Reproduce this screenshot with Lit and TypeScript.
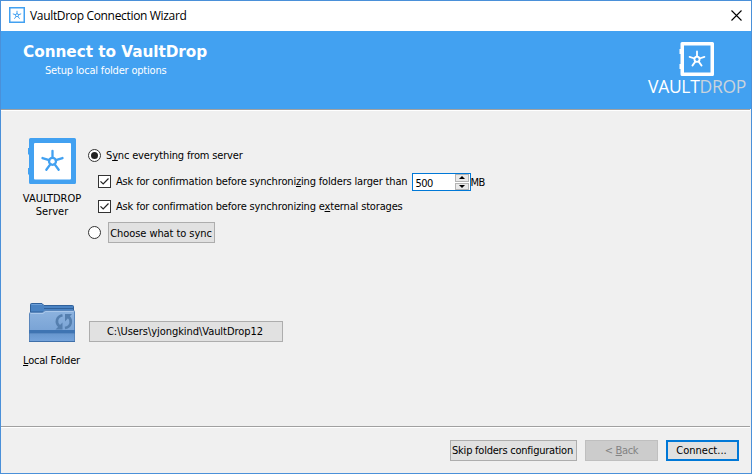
import { LitElement, html, svg, css } from "lit";
import { customElement, property } from "lit/decorators.js";

const dial = (cx: number, cy: number, r: number, reach: number, stroke: number) => {
  const arms = [-90, -18, 54, 126, 198].map((deg) => {
    const a = (deg * Math.PI) / 180;
    return `M${cx + Math.cos(a) * r} ${cy + Math.sin(a) * r}L${cx + Math.cos(a) * reach} ${cy + Math.sin(a) * reach}`;
  });
  return svg`<circle cx=${cx} cy=${cy} r=${r} fill="none" stroke="currentColor" stroke-width=${stroke}></circle>
    <path d=${arms.join("")} fill="none" stroke="currentColor" stroke-width=${stroke} stroke-linecap="round"></path>`;
};

@customElement("vault-mark")
export class VaultMark extends LitElement {
  @property() variant = "server";
  static styles = css`
    :host { display: block; }
    svg { display: block; }
  `;
  render() {
    if (this.variant === "title") {
      return html`<svg width="16" height="16" viewBox="0 0 16 16">
        <rect x="0.75" y="0.75" width="14.5" height="14.5" fill="#fff" stroke="currentColor" stroke-width="1.5"></rect>
        ${dial(8, 8.2, 1.5, 4, 1)}
      </svg>`;
    }
    if (this.variant === "banner") {
      return html`<svg width="36" height="34" viewBox="0 0 36 34">
        <path d="M3 0H33.5Q35 0 35 1.500V32.500Q35 34 33.500 34H3Q1.500 34 1.500 32.500V27H0.500V22H1.500V12H0.500V7H1.500V1.500Q1.500 0 3 0ZM5 3.500V30.500H31.500V3.500Z" fill="currentColor" fill-rule="evenodd"></path>
        ${dial(18, 17.3, 2.6, 7.8, 1.8)}
      </svg>`;
    }
    return html`<svg width="48" height="46" viewBox="0 0 48 46">
      <path d="M2.500 0H46.500Q48 0 48 1.500V44.500Q48 46 46.500 46H2.500Q1 46 1 44.500V36.500H0V30H1V16.500H0V10H1V1.500Q1 0 2.500 0Z" fill="currentColor"></path>
      <rect x="6" y="5" width="37" height="36.500" rx="1" fill="#fff"></rect>
      ${dial(24.5, 23.3, 3.5, 10.5, 2.3)}
    </svg>`;
  }
}

@customElement("folder-mark")
export class FolderMark extends LitElement {
  static styles = css`
    :host { display: block; }
    svg { display: block; }
  `;
  render() {
    return html`<svg width="46" height="39" viewBox="0 0 46 39">
      <defs>
        <linearGradient id="front" x1="0" y1="0" x2="0" y2="1">
          <stop offset="0" stop-color="#8db3df"></stop>
          <stop offset="1" stop-color="#6f9bd0"></stop>
        </linearGradient>
        <linearGradient id="foot" x1="0" y1="0" x2="0" y2="1">
          <stop offset="0" stop-color="#6897cf"></stop>
          <stop offset="1" stop-color="#75a3da"></stop>
        </linearGradient>
      </defs>
      <path d="M1.500 9V1.500Q1.500 0.500 2.500 0.500H13L15 2.500H43.500Q44.500 2.500 44.500 3.500V9Z" fill="#4a83c3" stroke="#30619b"></path>
      <path d="M2.500 1.500H13" stroke="#6ea0d9"></path>
      <path d="M15 5.500H44" stroke="#30619b"></path>
      <path d="M0.500 38.500V10.500Q0.500 9.500 1.500 9.500H13.500L16 7.500H44.500Q45.500 7.500 45.500 8.500V38.500Z" fill="url(#front)" stroke="#5a86bb"></path>
      <path d="M1.500 10.500H14L16.500 8.500H44.500" fill="none" stroke="#a9c7ea"></path>
      <rect x="0" y="27" width="46" height="3.500" fill="#3f74b2"></rect>
      <rect x="1" y="31" width="44" height="7" fill="url(#foot)"></rect>
      <path d="M0 38.500H46" stroke="#3e6fa9"></path>
      <path d="M33.500 12.200C27.500 13.500 26 19.500 30.500 23.500" fill="none" stroke="#557faf" stroke-width="2.600"></path>
      <path d="M26.500 26.500H33.500V19.500Z" fill="#557faf"></path>
      <path d="M36 25C42.500 23.500 43.500 17.500 39.300 13.500" fill="none" stroke="#557faf" stroke-width="2.600"></path>
      <path d="M43 11H36V18.500Z" fill="#557faf"></path>
    </svg>`;
  }
}

@customElement("app-root")
export class AppRoot extends LitElement {
  static styles = css`
    :host {
      display: flex; flex-direction: column; box-sizing: border-box;
      width: 752px; height: 474px; border: 1px solid #4a90d9; background: #f0f0f0;
      font: 11px/13px "DejaVu Sans Condensed", "DejaVu Sans", sans-serif;
      color: #000; white-space: nowrap; overflow: hidden;
    }
    u { text-decoration: underline; text-underline-offset: 1px; text-decoration-thickness: 1px; text-decoration-skip-ink: none; }
    .titlebar { display: flex; align-items: center; height: 30px; box-sizing: border-box; padding: 0 9px 0 8px; background: #fff; }
    .titlebar vault-mark { color: #42a1f1; margin-top: -2px; }
    .caption { flex: 1; margin-left: 5px; font: 12px/16px "Open Sans", "Noto Sans", sans-serif; letter-spacing: -0.33px; }
    .close { margin-top: -2px; }
    .banner { display: flex; justify-content: space-between; height: 78px; box-sizing: border-box; padding: 11px 4px 0 22px; background: #42a1f1; color: #fff; }
    .heading { font: bold 15.3px/20px "DejaVu Sans", sans-serif; letter-spacing: -0.05px; }
    .sub { margin: 2px 0 0 22px; letter-spacing: -0.19px; }
    .brand { display: flex; flex-direction: column; align-items: center; width: 100px; }
    .word { font: 17.5px/20px "Open Sans", sans-serif; letter-spacing: -0.3px; }
    .drop { color: #c9d3dc; }
    .rule { height: 1px; background: #a0a0a0; border-bottom: 1px solid #fff; margin-right: 1px; flex: none; }
    .body { flex: 1; padding: 27px 0 0 20px; }
    .section { display: grid; grid-template-columns: 62px 1fr; column-gap: 5px; }
    .server { height: 165px; }
    .side { display: flex; flex-direction: column; align-items: center; text-align: center; }
    .server vault-mark { color: #42a1f1; margin-left: -1px; }
    .server .label { margin-top: 8px; }
    .local .label { margin-top: 12px; margin-right: 1px; letter-spacing: -0.2px; }
    .options { display: flex; flex-direction: column; padding-top: 5px; }
    .row { display: flex; align-items: center; height: 25px; }
    .gap { margin-top: 1px; }
    .indent { padding-left: 10px; }
    .radio { width: 13px; height: 13px; box-sizing: border-box; border: 1px solid #333; border-radius: 50%; background: #fff; display: grid; place-items: center; }
    .dot { width: 7px; height: 7px; border-radius: 50%; background: #222; }
    .check { width: 13px; height: 13px; box-sizing: border-box; border: 1px solid #333; background: #fff; }
    .check svg { display: block; }
    .text { margin-left: 5px; letter-spacing: -0.165px; }
    .spin { display: flex; box-sizing: border-box; width: 59px; height: 18px; margin: 1px 0 0 5px; border: 1px solid #0078d7; background: #fff; }
    .num { flex: 1; padding: 3px 0 0 2px; letter-spacing: -0.5px; }
    .mb { letter-spacing: -0.5px; margin: 2px 0 0 -1px; }
    .steps { display: flex; flex-direction: column; gap: 1px; width: 14px; padding: 0 1px 0 0; }
    .step { flex: 1; display: grid; place-items: center; background: #e9e9e9; border: 1px solid #b4b4b4; box-sizing: border-box; }
    .step svg { display: block; }
    .btn { display: flex; align-items: center; justify-content: center; box-sizing: border-box; height: 21px; border: 1px solid #adadad; background: #e1e1e1; }
    .choose { width: 107px; margin-left: 7px; padding-right: 1px; letter-spacing: -0.07px; padding-top: 1px; }
    .path { width: 194px; margin: 18px 0 0 1px; padding-right: 2px; letter-spacing: -0.05px; }
    .footer { display: flex; justify-content: flex-end; gap: 8px; height: 45px; box-sizing: border-box; padding: 12px 12px 0 0; }
    .skip { width: 127px; padding-right: 2px; letter-spacing: -0.23px; }
    .nav { width: 73px; }
    .off { background: #ccc; border-color: #bfbfbf; color: #838383; letter-spacing: -0.35px; }
    .main { border: 2px solid #0078d7; padding-right: 2px; }
  `;

  private check() {
    return html`<div class="check"><svg width="11" height="11" viewBox="0 0 11 11">
      <path d="M1.500 5.300L4.200 8L9.500 2.500" fill="none" stroke="#222" stroke-width="1.200"></path></svg></div>`;
  }

  render() {
    return html`
      <div class="titlebar">
        <vault-mark variant="title"></vault-mark>
        <div class="caption">VaultDrop Connection Wizard</div>
        <svg class="close" width="11" height="11" viewBox="0 0 11 11"><path d="M0.500 0.500L10.500 10.500M10.500 0.500L0.500 10.500" stroke="#000" stroke-width="1.100"></path></svg>
      </div>
      <div class="banner">
        <div>
          <div class="heading">Connect to VaultDrop</div>
          <div class="sub">Setup local folder options</div>
        </div>
        <div class="brand">
          <vault-mark variant="banner"></vault-mark>
          <div class="word">VAULT<span class="drop">DROP</span></div>
        </div>
      </div>
      <div class="rule"></div>
      <div class="body">
        <div class="section server">
          <div class="side">
            <vault-mark></vault-mark>
            <div class="label">VAULTDROP<br />Server</div>
          </div>
          <div class="options">
            <div class="row"><div class="radio"><div class="dot"></div></div><span class="text">S<u>y</u>nc everything from server</span></div>
            <div class="row indent gap">${this.check()}<span class="text">Ask for confirmation before synchroni<u>z</u>ing folders larger than</span>
              <div class="spin"><span class="num">500</span>
                <div class="steps">
                  <div class="step"><svg width="6" height="3" viewBox="0 0 6 3"><path d="M3 0L6 3H0Z"></path></svg></div>
                  <div class="step"><svg width="6" height="3" viewBox="0 0 6 3"><path d="M0 0H6L3 3Z"></path></svg></div>
                </div>
              </div><span class="mb">MB</span></div>
            <div class="row indent">${this.check()}<span class="text">Ask for confirmation before synchronizing e<u>x</u>ternal storages</span></div>
            <div class="row gap"><div class="radio"></div><div class="btn choose">Choose what to sync</div></div>
          </div>
        </div>
        <div class="section local">
          <div class="side">
            <folder-mark></folder-mark>
            <div class="label"><u>L</u>ocal Folder</div>
          </div>
          <div class="btn path">C:\\Users\\yjongkind\\VaultDrop12</div>
        </div>
      </div>
      <div class="rule"></div>
      <div class="footer">
        <div class="btn skip">Skip folders configuration</div>
        <div class="btn nav off"><span>&lt; <u>B</u>ack</span></div>
        <div class="btn nav main">Connect...</div>
      </div>
    `;
  }
}
